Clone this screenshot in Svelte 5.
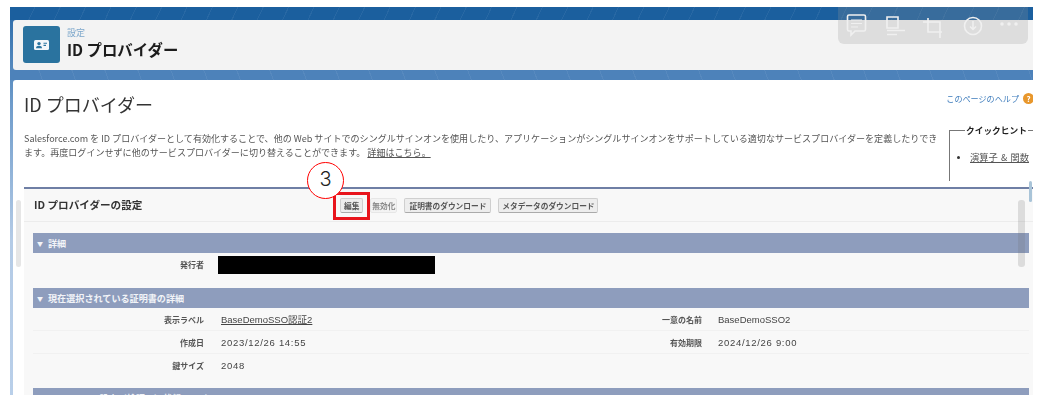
<script>
    const buttons = [
        { text: "編集", cls: "" },
        { text: "無効化", cls: "off" },
        { text: "証明書のダウンロード", cls: "cert" },
        { text: "メタデータのダウンロード", cls: "meta" },
    ];

    const certRows = [
        { label: "表示ラベル", value: "BaseDemoSSO認証2", link: true, label2: "一意の名前", value2: "BaseDemoSSO2" },
        { label: "作成日", value: "2023/12/26 14:55", num: true, label2: "有効期限", value2: "2024/12/26 9:00" },
        { label: "鍵サイズ", value: "2048", num: true, label2: "", value2: "" },
    ];
</script>

<div class="shot">
    <div class="frame">
        <div class="band dark"></div>
        <header class="pagehead">
            <div class="appicon">
                <svg width="15" height="10" viewBox="0 0 15 10">
                    <rect width="15" height="10" rx="1.5" fill="#f2f6fa" />
                    <circle cx="5" cy="3.6" r="1.7" fill="#2a739f" />
                    <path d="M2 8.2c0-1.6 1.3-2.4 3-2.4s3 .8 3 2.4z" fill="#2a739f" />
                    <path d="M9.5 3.2h3.5M9.5 5.4h2.5" stroke="#2a739f" stroke-width="1.1" />
                </svg>
            </div>
            <div class="headtext">
                <span class="crumb">設定</span>
                <span class="apptitle">ID プロバイダー</span>
            </div>
        </header>
        <div class="band light"></div>

        <main class="content">
            <div class="titlerow">
                <h1>ID プロバイダー</h1>
                <a class="help" href="#help">このページのヘルプ <span class="helpicon">?</span></a>
            </div>

            <div class="intro">
                <p>
                    Salesforce.com を ID プロバイダーとして有効化することで、他の Web サイトでのシングルサインオンを使用したり、アプリケーションがシングルサインオンをサポートしている適切なサービスプロバイダーを定義したりできます。再度ログインせずに他のサービスプロバイダーに切り替えることができます。
                    <a href="#more">詳細はこちら。</a>
                </p>
                <fieldset class="hints">
                    <legend>クイックヒント</legend>
                    <ul>
                        <li><a href="#ops">演算子 &amp; 関数</a></li>
                    </ul>
                </fieldset>
            </div>

            <section class="panel">
                <div class="panelhead">
                    <h2>ID プロバイダーの設定</h2>
                    <div class="buttons">
                        {#each buttons as b}
                            <button class={b.cls}>{b.text}</button>
                        {/each}
                    </div>
                </div>

                <div class="bar"><span class="arrow">▼</span>詳細</div>
                <div class="issuer">
                    <span class="label">発行者</span>
                    <span class="redacted"></span>
                </div>

                <div class="bar"><span class="arrow">▼</span>現在選択されている証明書の詳細</div>
                <div class="rows">
                    {#each certRows as r}
                        <div class="row">
                            <span class="label">{r.label}</span>
                            <span class="value" class:link={r.link} class:num={r.num}>{r.value}</span>
                            <span class="label">{r.label2}</span>
                            <span class="value second" class:num={r.num}>{r.value2}</span>
                        </div>
                    {/each}
                </div>

                <div class="bar"><span class="arrow">▼</span>SAML 2.0 の設定（検証用）状態 リンク</div>
            </section>
        </main>
    </div>

    <!-- stuff lying on top of the screenshot -->
    <div class="viewer">
        <svg width="190" height="37" viewBox="0 0 190 37" fill="none" stroke="#f0f0f0" stroke-width="1.6">
            <path d="M11 8h15a1.500 1.500 0 0 1 1.500 1.500v13a1.500 1.500 0 0 1-1.500 1.500h-9l-4 4v-4h-2a1.500 1.500 0 0 1-1.500-1.500v-13a1.500 1.500 0 0 1 1.500-1.500z" />
            <path d="M13 13h11M13 16.500h11M13 20h7" stroke-width="1" />
            <path d="M49 10h11v11h-11zM49 23.500h18M49 27.500h10" />
            <path d="M90 11v14h14M85 15h17v16" />
            <circle cx="135" cy="19" r="8.500" />
            <path d="M135 14v8M132 19.500l3 3 3-3" stroke-width="1.500" />
            <circle cx="164" cy="17" r="1.800" fill="#f0f0f0" stroke="none" />
            <circle cx="171" cy="17" r="1.800" fill="#f0f0f0" stroke="none" />
            <circle cx="178" cy="17" r="1.800" fill="#f0f0f0" stroke="none" />
        </svg>
    </div>
    <div class="scroll sleft"></div>
    <div class="scroll sright"></div>
    <div class="scroll stiny"></div>
    <div class="redbox"></div>
    <div class="callout">3</div>
</div>

<style>
    :global(body) {
        margin: 0;
        background: #fff;
    }
    .shot {
        position: relative;
        width: 1042px;
        height: 403px;
        overflow: hidden;
        padding: 7px 9px 8px 10px;
        box-sizing: border-box;
        font-family: "Noto Sans CJK JP", "Liberation Sans", sans-serif;
        color: #333;
    }
    .frame {
        height: 388px;
        overflow: hidden;
        display: flex;
        flex-direction: column;
        background: linear-gradient(#2a6aa8, #6f9ccb 25%, #b4cbe6 60%, #b9cfe9);
    }
    .band {
        flex: none;
        background-color: #1b5f9e;
    }
    .band.dark {
        height: 13px;
        background-image: repeating-linear-gradient(115deg, transparent 0 22px, rgba(255, 255, 255, 0.06) 22px 23px);
    }
    .band.light {
        height: 10px;
        background-color: #4d82ba;
        background-image: repeating-linear-gradient(70deg, transparent 0 30px, rgba(255, 255, 255, 0.06) 30px 31px);
    }
    .pagehead {
        flex: none;
        height: 50px;
        margin-left: 3px;
        box-sizing: border-box;
        padding: 6px 0 0 10px;
        background: #f3f3f3;
        border-radius: 3px 0 0 3px;
        display: flex;
        gap: 7px;
    }
    .appicon {
        width: 37px;
        height: 37px;
        border-radius: 3px;
        background: #2a739f;
        display: flex;
        align-items: center;
        justify-content: center;
    }
    .headtext {
        display: flex;
        flex-direction: column;
        filter: blur(0.4px);
    }
    .crumb {
        font-size: 9px;
        line-height: 12px;
        margin-top: 1px;
        color: #7da7cb;
    }
    .apptitle {
        font-size: 15.400px;
        line-height: 20px;
        font-weight: 700;
        color: #1c1c1c;
        white-space: nowrap;
    }
    .content {
        flex: 1;
        margin-left: 3px;
        background: #fff;
        border-radius: 3px 0 0 0;
        padding: 0 0 0 11px;
        min-height: 0;
    }
    .titlerow {
        display: flex;
        justify-content: space-between;
        padding-top: 10px;
        height: 33px;
    }
    h1 {
        margin: 0;
        font-size: 18px;
        line-height: 28px;
        font-weight: 400;
        color: #333;
        white-space: nowrap;
        filter: blur(0.3px);
    }
    .help {
        display: flex;
        gap: 4px;
        align-items: flex-start;
        color: #3e7cbc;
        font-size: 8.100px;
        line-height: 13px;
        text-decoration: none;
        white-space: nowrap;
        margin-top: 2px;
        filter: blur(0.4px);
    }
    .helpicon {
        width: 11px;
        height: 11px;
        margin-top: 1px;
        margin-right: -1px;
        border-radius: 50%;
        background: #e8972c;
        color: #fff;
        font-size: 8px;
        line-height: 11px;
        font-weight: 700;
        text-align: center;
    }
    .intro {
        display: flex;
        height: 64px;
        padding-top: 8px;
        box-sizing: border-box;
        gap: 7px;
    }
    .intro p {
        margin: 0;
        width: 918px;
        flex: none;
        font-size: 9.060px;
        line-height: 14px;
        color: #555;
        filter: blur(0.5px);
    }
    .intro p a {
        color: #555;
    }
    .hints {
        margin: -6px 0 0;
        padding: 14px 0 0 8px;
        flex: 1;
        min-width: 0;
        height: 56px;
        box-sizing: border-box;
        border: 0;
        border-top: 1px solid #777;
        border-left: 1px solid #777;
    }
    .hints legend {
        padding: 0 1px;
        margin-left: 7px;
        font-size: 8.700px;
        line-height: 11px;
        font-weight: 700;
        color: #222;
        filter: blur(0.3px);
    }
    .hints ul {
        margin: 0;
        padding: 0 0 0 12px;
        font-size: 9.300px;
        line-height: 14px;
        word-spacing: 1px;
        white-space: nowrap;
        filter: blur(0.5px);
    }
    .hints li::marker {
        font-size: 8px;
    }
    .hints a {
        color: #555;
    }
    .panel {
        height: 209px;
        overflow: hidden;
        box-sizing: border-box;
        background: #f8f8f8;
        border-top: 2px solid #6f7fa5;
    }
    .panelhead {
        height: 33px;
        box-sizing: border-box;
        border-bottom: 1px solid #ececec;
        display: flex;
        align-items: center;
        padding-left: 10px;
    }
    h2 {
        margin: 0 0 1px;
        width: 306px;
        flex: none;
        font-size: 10.600px;
        font-weight: 700;
        color: #333;
        white-space: nowrap;
        filter: blur(0.4px);
    }
    .buttons {
        display: flex;
        gap: 7px;
        margin-top: 1px;
    }
    button {
        height: 15px;
        padding: 0 3px;
        font-family: inherit;
        font-size: 7.700px;
        line-height: 13px;
        font-weight: 700;
        color: #555;
        background: #ededed;
        border: 1px solid #cfcfcf;
        border-bottom-color: #aaa;
        border-radius: 2px;
        white-space: nowrap;
        filter: blur(0.4px);
    }
    button.off {
        width: 27px;
        padding: 0;
        color: #888;
        background: #f3f3f3;
        border-color: #e6e6e6;
    }
    button.cert {
        width: 87px;
        padding: 0;
    }
    button.meta {
        width: 100px;
        padding: 0;
    }
    .bar {
        height: 20px;
        margin: 11px 4px 0 9px;
        padding-left: 4px;
        background: #8e9dbd;
        color: #f2f4f8;
        font-size: 9.100px;
        line-height: 20px;
        font-weight: 700;
        white-space: nowrap;
    }
    .arrow {
        display: inline-block;
        width: 11px;
        font-size: 6px;
        vertical-align: 1px;
    }
    .issuer + .bar {
        margin-top: 13px;
    }
    .rows + .bar {
        margin-top: 12px;
    }
    .issuer {
        display: flex;
        align-items: center;
        height: 22px;
        margin-left: 9px;
    }
    .issuer .label {
        width: 171px;
        flex: none;
    }
    .redacted {
        width: 217px;
        height: 18px;
        margin-left: 14px;
        margin-top: 1px;
        background: #000;
    }
    .label {
        font-size: 8px;
        font-weight: 700;
        color: #555;
        text-align: right;
        white-space: nowrap;
        filter: blur(0.4px);
    }
    .rows {
        margin: 0 4px 0 9px;
    }
    .row {
        display: grid;
        grid-template-columns: 171px 359px 139px 1fr;
        align-items: center;
        height: 22px;
        border-bottom: 1px solid #f1f1f1;
    }
    .row:last-child {
        border-bottom: 0;
    }
    .value {
        padding-left: 17px;
        font-family: "Liberation Sans", "Noto Sans CJK JP", sans-serif;
        font-size: 9.500px;
        color: #444;
        white-space: nowrap;
        filter: blur(0.4px);
    }
    .value.num {
        letter-spacing: 0.7px;
    }
    .value.second {
        padding-left: 16px;
    }
    .value.link {
        text-decoration: underline;
    }
    .viewer {
        position: absolute;
        left: 838px;
        top: 7px;
        width: 190px;
        height: 37px;
        border-radius: 0 0 6px 6px;
        background: rgba(150, 150, 150, 0.24);
    }
    .viewer svg {
        display: block;
        filter: blur(0.7px);
    }
    .scroll {
        position: absolute;
        border-radius: 3px;
    }
    .sleft {
        left: 16px;
        top: 200px;
        width: 5px;
        height: 67px;
        background: #e6e6e6;
    }
    .sright {
        left: 1018px;
        top: 200px;
        width: 7px;
        height: 67px;
        background: rgba(110, 110, 110, 0.2);
    }
    .stiny {
        left: 1029px;
        top: 181px;
        width: 3px;
        height: 21px;
        background: #a9c4d8;
    }
    .redbox {
        position: absolute;
        left: 333px;
        top: 192px;
        width: 37px;
        height: 28px;
        box-sizing: border-box;
        border: 3px solid #e8141c;
    }
    .callout {
        position: absolute;
        left: 307px;
        top: 162px;
        width: 37px;
        height: 37px;
        box-sizing: border-box;
        border: 1.500px solid #f00;
        border-radius: 50%;
        background: #fff;
        color: #222;
        font-family: Inter, "Liberation Sans", sans-serif;
        font-size: 20px;
        font-weight: 300;
        line-height: 32px;
        text-align: center;
    }
</style>
